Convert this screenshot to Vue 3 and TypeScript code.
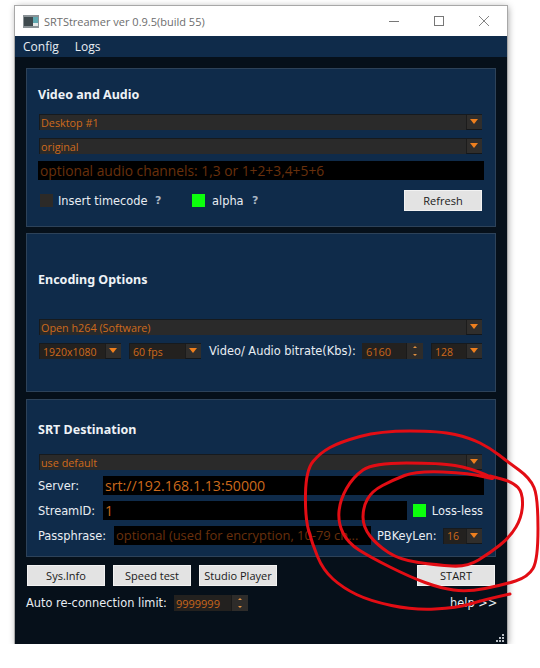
<script setup lang="ts">
type Pt = [number, number];
const pts: Pt[] = [
  [510, 594], [483, 600], [457, 608], [413, 610], [370, 601], [343, 588], [323, 570], [312, 543], [305, 517], [306, 470],
  [320, 453], [340, 442], [380, 431], [440, 431], [470, 438], [490, 448], [508, 462], [530, 478], [538, 497], [538, 560],
  [528, 577], [503, 585], [467, 592], [440, 588], [410, 577], [370, 557], [348, 543], [338, 523], [340, 500], [353, 477],
  [373, 463], [440, 463], [470, 468], [500, 481], [470, 473], [416, 471], [393, 480], [372, 491], [363, 507], [363, 527],
  [377, 545], [400, 560], [437, 565], [467, 567], [490, 553], [510, 537], [522, 517], [523, 493], [513, 482], [490, 476],
];
const scribble = pts.reduce((d, p, i) => {
  if (i === 0) return `M${p[0]} ${p[1]}`;
  if (i === pts.length - 1) return `${d} L${p[0]} ${p[1]}`;
  const n = pts[i + 1];
  return `${d} Q${p[0]} ${p[1]} ${(p[0] + n[0]) / 2} ${(p[1] + n[1]) / 2}`;
}, "");
</script>

<template>
  <div class="window">
    <header class="titlebar">
      <svg class="appicon" width="16" height="13" viewBox="0 0 16 13">
        <rect width="16" height="13" fill="#8a9296" />
        <rect x="1" y="2" width="9" height="9" fill="#3f4a4e" />
        <rect x="10" y="2" width="5" height="6" fill="#5fa8b0" />
        <rect x="10" y="8" width="5" height="3" fill="#e4e8e8" />
      </svg>
      <span class="title">SRTStreamer ver 0.9.5(build 55)</span>
      <div class="winbtns">
        <svg width="10" height="10" viewBox="0 0 10 10"><path d="M0 5.5H10" stroke="#777" /></svg>
        <svg width="10" height="10" viewBox="0 0 10 10"><rect x=".5" y=".5" width="9" height="9" fill="none" stroke="#777" /></svg>
        <svg width="10" height="10" viewBox="0 0 10 10"><path d="M0 0L10 10M10 0L0 10" stroke="#777" stroke-width=".9" /></svg>
      </div>
    </header>

    <nav class="menubar"><span>Config</span><span>Logs</span></nav>

    <main class="content">
      <section class="panel p1">
        <h2>Video and Audio</h2>
        <div class="combo"><span>Desktop #1</span><i class="arrow"></i></div>
        <div class="combo"><span>original</span><i class="arrow"></i></div>
        <div class="field ph audio">optional audio channels: 1,3 or 1+2+3,4+5+6</div>
        <div class="row options">
          <i class="check off"></i>
          <span class="lbl timecode">Insert timecode</span>
          <b class="q q1">?</b>
          <i class="check on alpha-box"></i>
          <span class="lbl alpha">alpha</span>
          <b class="q q2">?</b>
          <button class="btn refresh">Refresh</button>
        </div>
      </section>

      <section class="panel p2">
        <h2>Encoding Options</h2>
        <div class="combo"><span>Open h264 (Software)</span><i class="arrow"></i></div>
        <div class="row enc">
          <div class="combo small res"><span>1920x1080</span><i class="arrow"></i></div>
          <div class="combo small fps"><span>60 fps</span><i class="arrow"></i></div>
          <span class="lbl bitrate">Video/ Audio bitrate(Kbs):</span>
          <div class="spin kbs"><span>6160</span><i class="spinbtn"><em class="up"></em><em class="dn"></em></i></div>
          <div class="combo small audio-rate"><span>128</span><i class="arrow"></i></div>
        </div>
      </section>

      <section class="panel p3">
        <h2>SRT Destination</h2>
        <div class="combo"><span>use default</span><i class="arrow"></i></div>
        <div class="row srv">
          <span class="lbl name">Server:</span>
          <div class="field val grow">srt://192.168.1.13:50000</div>
        </div>
        <div class="row sid">
          <span class="lbl name">StreamID:</span>
          <div class="field val grow">1</div>
          <i class="check on lossbox"></i>
          <span class="lbl">Loss-less</span>
        </div>
        <div class="row pass">
          <span class="lbl passname">Passphrase:</span>
          <div class="field ph grow passfield">optional (used for encryption, 10-79 ch...</div>
          <span class="lbl pb">PBKeyLen:</span>
          <div class="combo small key"><span>16</span><i class="arrow"></i></div>
        </div>
      </section>

      <div class="row actions">
        <button class="btn">Sys.Info</button>
        <button class="btn">Speed test</button>
        <button class="btn">Studio Player</button>
        <button class="btn start">START</button>
      </div>

      <div class="row foot">
        <span class="lbl">Auto re-connection limit:</span>
        <div class="spin limit"><span>9999999</span><i class="spinbtn"><em class="up"></em><em class="dn"></em></i></div>
        <span class="lbl help">help &gt;&gt;</span>
      </div>
    </main>

    <svg class="grip" width="8" height="8" viewBox="0 0 8 8" fill="#b8bec4">
      <rect x="6" y="0" width="2" height="2" /><rect x="3" y="3" width="2" height="2" /><rect x="6" y="3" width="2" height="2" />
      <rect x="0" y="6" width="2" height="2" /><rect x="3" y="6" width="2" height="2" /><rect x="6" y="6" width="2" height="2" />
    </svg>
  </div>

  <svg class="scribble" width="540" height="668" viewBox="0 0 540 668">
    <path :d="scribble" fill="none" stroke="#e20d14" stroke-width="3" stroke-linejoin="round" stroke-linecap="round" />
  </svg>
</template>

<style scoped>
.window {
  position: relative;
  box-sizing: border-box;
  margin: 6px 0 0 15px;
  width: 492px;
  height: 638px;
  display: flex;
  flex-direction: column;
  background: #06101a;
  box-shadow: 1px 1px 7px rgba(0, 0, 0, 0.4);
  outline: 1px solid #a8a8a8;
  font-family: "DejaVu Sans", sans-serif;
  font-size: 11.4px;
  color: #e8edf2;
}
.titlebar {
  height: 30px;
  flex: none;
  display: flex;
  align-items: center;
  background: #fff;
  padding: 0 18px 0 8px;
}
.appicon { margin-right: 5px; }
.title {
  font-family: "Open Sans", sans-serif;
  font-size: 11px;
  color: #6d6d6d;
}
.winbtns {
  margin-left: auto;
  display: flex;
  gap: 35px;
}
.menubar {
  height: 21px;
  flex: none;
  display: flex;
  gap: 16px;
  align-items: center;
  padding-left: 8px;
  background: #0f2b4a;
  font-family: "Open Sans", sans-serif;
  font-size: 12px;
}
.content {
  flex: 1;
  padding: 11px 11px 0;
  display: flex;
  flex-direction: column;
}
.panel {
  box-sizing: border-box;
  height: 159px;
  padding: 17px 13px 0 12px;
  background: #0f2b4a;
  border: 1px solid #2d4259;
  margin-bottom: 6px;
}
.p3 { margin-top: 1px; margin-bottom: 8px; height: 158px; }
h2 {
  margin: 0;
  height: 16px;
  line-height: 16px;
  font-family: "Noto Sans", sans-serif;
  font-size: 12.5px;
  font-weight: 700;
  color: #eef2f6;
}
.p1 h2 { margin: 1px 0 11px -1px; }
.p2 h2 { margin: 21px 0 31px -1px; }
.p3 h2 { margin: 5px 0 16px -1px; }
.row { display: flex; align-items: center; }
.combo {
  box-sizing: border-box;
  height: 16px;
  display: flex;
  align-items: center;
  margin-bottom: 8px;
  padding-left: 1px;
  background: #2a2a2a;
  border-top: 1px solid #161a1e;
  border-left: 1px solid #161a1e;
  color: #cf6a1c;
  font-size: 10.8px;
  font-family: "Open Sans", sans-serif;
  overflow: hidden;
}
.combo span { flex: 1; white-space: nowrap; }
.arrow {
  position: relative;
  flex: none;
  box-sizing: border-box;
  width: 16px;
  height: 15px;
  background: #302e2c;
  border-left: 1px solid #1c1c1c;
  border-bottom: 1px solid #14171a;
}
.arrow::after {
  content: "";
  position: absolute;
  left: 3px;
  top: 4px;
  border-left: 4px solid transparent;
  border-right: 4px solid transparent;
  border-top: 5px solid #ee7f1e;
}
.field {
  box-sizing: border-box;
  height: 19px;
  line-height: 19px;
  padding-left: 2px;
  background: #000;
  font-family: "Open Sans", sans-serif;
  font-size: 14.2px;
  white-space: nowrap;
  overflow: hidden;
}
.ph { color: #69300c; }
.val { color: #cc6a1c; }
.grow { flex: 1; min-width: 0; }
.audio { margin: -1px -2px 0 -1px; font-size: 13.8px; }
.passfield { font-size: 12.9px; }
.lbl { white-space: nowrap; }
.check { flex: none; display: block; width: 13px; height: 13px; }
.check.off { background: #2c2a28; }
.check.on { background: #0cff0c; }
.options { margin-top: 10px; height: 21px; padding-left: 1px; }
.timecode { margin-left: 5px; width: 89px; }
.q { color: #a9b6c4; font-size: 11px; }
.q1 { margin-left: 8px; width: 7px; }
.alpha-box { margin-left: 30px; margin-right: 7px; }
.alpha { width: 30px; }
.q2 { margin-left: 10px; }
.btn {
  box-sizing: border-box;
  width: 78px;
  height: 21px;
  padding: 0;
  background: #e3e3e3;
  border: 1px solid #f2f2f2;
  border-radius: 0;
  color: #1a1a1a;
  font-family: "Open Sans", sans-serif;
  font-size: 11px;
}
.refresh { margin-left: auto; }
.enc { margin-top: 8px; }
.enc .combo, .pass .combo { margin-bottom: 0; }
.small { background: #23211f; padding-left: 3px; font-size: 10.5px; }
.res { width: 82px; }
.fps { width: 72px; margin-left: 8px; }
.bitrate { margin-left: 8px; width: 153px; }
.spin {
  box-sizing: border-box;
  height: 16px;
  display: flex;
  align-items: center;
  padding-left: 4px;
  background: #23211f;
  color: #c8661c;
  font-family: "Open Sans", sans-serif;
  font-size: 11px;
}
.spin span { flex: 1; }
.kbs { width: 61px; }
.audio-rate { width: 51px; margin-left: 8px; }
.spinbtn {
  display: flex;
  flex-direction: column;
  align-items: center;
  justify-content: space-around;
  width: 16px;
  height: 16px;
  background: #2e2c2a;
  border-left: 1px solid #1a1a1a;
}
.spinbtn em { display: block; width: 0; height: 0; border-left: 2px solid transparent; border-right: 2px solid transparent; }
.spinbtn .up { border-bottom: 2px solid #e09040; }
.spinbtn .dn { border-top: 2px solid #e09040; }
.srv { margin-top: -2px; height: 19px; }
.sid { margin-top: 6px; height: 19px; }
.pass { margin-top: 6px; height: 19px; }
.name, .passname { margin-left: -1px; }
.srv .field { margin-right: -2px; }
.name { width: 65px; flex: none; }
.passname { width: 76px; flex: none; }
.lossbox { margin-left: 6px; margin-right: 6px; }
.sid .lbl:last-child { margin-right: -1px; }
.pb { margin-left: 6px; width: 58px; }
.key { width: 39px; margin-left: 8px; }
.actions { gap: 8px; padding-left: 1px; }
.actions .start { margin-left: 132px; }
.foot { margin-top: 9px; height: 16px; }
.limit { width: 74px; margin-left: 7px; padding-left: 2px; }
.help { margin-left: auto; margin-right: 1px; width: 45px; }
.grip { position: absolute; right: 3px; bottom: 2px; }
.scribble { position: absolute; left: 0; top: 0; pointer-events: none; }
</style>

<style>
html, body { background: #fff; overflow: hidden; }
</style>
